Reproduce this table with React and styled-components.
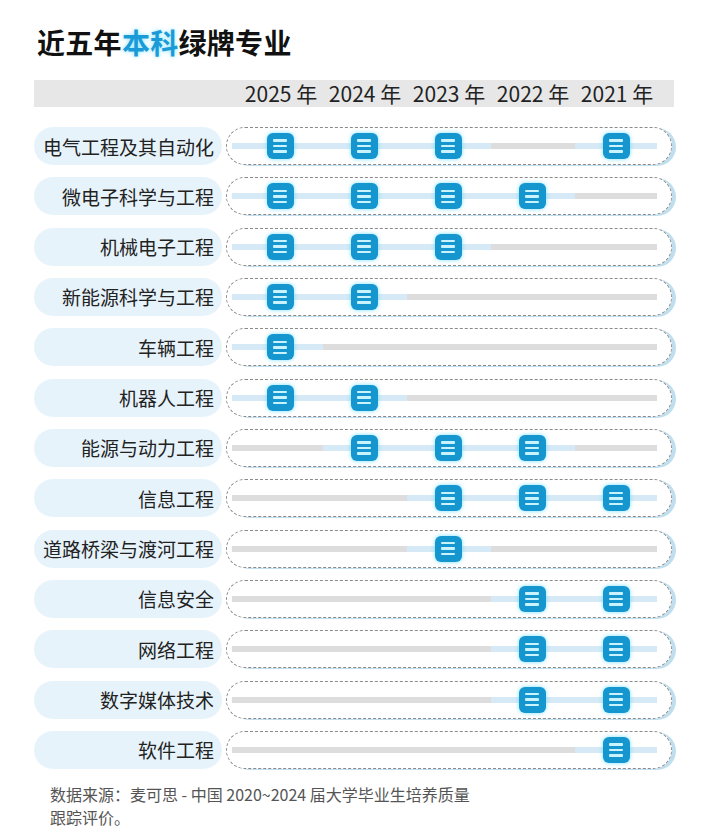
import React from "react";
import styled, { createGlobalStyle } from "styled-components";

const years = ["2025 年", "2024 年", "2023 年", "2022 年", "2021 年"];

const majors = [
  { name: "电气工程及其自动化", on: [1, 1, 1, 0, 1] },
  { name: "微电子科学与工程", on: [1, 1, 1, 1, 0] },
  { name: "机械电子工程", on: [1, 1, 1, 0, 0] },
  { name: "新能源科学与工程", on: [1, 1, 0, 0, 0] },
  { name: "车辆工程", on: [1, 0, 0, 0, 0] },
  { name: "机器人工程", on: [1, 1, 0, 0, 0] },
  { name: "能源与动力工程", on: [0, 1, 1, 1, 0] },
  { name: "信息工程", on: [0, 0, 1, 1, 1] },
  { name: "道路桥梁与渡河工程", on: [0, 0, 1, 0, 0] },
  { name: "信息安全", on: [0, 0, 0, 1, 1] },
  { name: "网络工程", on: [0, 0, 0, 1, 1] },
  { name: "数字媒体技术", on: [0, 0, 0, 1, 1] },
  { name: "软件工程", on: [0, 0, 0, 0, 1] },
];

const GlobalStyle = createGlobalStyle`
  body {
    margin: 0;
    background: #ffffff;
    font-family: "Noto Sans CJK SC", "Noto Sans", sans-serif;
  }
`;

const Page = styled.div`
  width: 712px;
  height: 831px;
  padding: 26px 0 0 34px;
  box-sizing: border-box;
  overflow: hidden;
`;

const Title = styled.h1`
  margin: 0 0 0 3px;
  font-size: 28px;
  line-height: 32px;
  font-weight: 700;
  color: #111;
  letter-spacing: 0.3px;
`;

const Accent = styled.span`
  color: #1a9bd7;
  text-shadow: 0 0 4px rgba(90, 220, 255, 0.7);
`;

const HeaderBar = styled.div`
  margin-top: 22px;
  width: 640px;
  height: 27px;
  background: #e7e7e7;
  display: grid;
  grid-template-columns: 205px repeat(5, 84px);
  align-items: center;
`;

const Year = styled.div`
  grid-column: ${(p) => p.col};
  text-align: center;
  font-size: 21px;
  line-height: 27px;
  color: #222;
  white-space: nowrap;
`;

const Rows = styled.div`
  margin-top: 20px;
  display: flex;
  flex-direction: column;
  gap: 12.33px;
`;

const Row = styled.div`
  display: grid;
  grid-template-columns: 188px 446px;
  column-gap: 4px;
  height: 38px;
`;

const Label = styled.div`
  background: #e7f3fb;
  border-radius: 19px;
  display: flex;
  align-items: center;
  justify-content: flex-end;
  padding-right: 8px;
  font-size: 19px;
  color: #222;
  white-space: nowrap;
`;

const Track = styled.div`
  border: 1px dashed #8a8a8a;
  border-radius: 19px;
  box-sizing: border-box;
  box-shadow: 4px 1px 0 #bfdeee;
  display: flex;
  align-items: center;
  padding-left: 12px;
`;

const Cell = styled.div`
  position: relative;
  width: 84px;
  height: 100%;
  display: flex;
  align-items: center;
  justify-content: center;

  &::before {
    content: "";
    position: absolute;
    top: 50%;
    margin-top: -3px;
    height: 6px;
    left: ${(p) => (p.first ? "-7px" : "0")};
    right: ${(p) => (p.last ? "2px" : "0")};
    background: ${(p) => (p.active ? "#d5eaf6" : "#dddddd")};
  }
`;

const Badge = styled.div`
  position: relative;
  width: 27px;
  height: 26px;
  border-radius: 6px;
  background: #1596cf;
  box-shadow: 0 0 4px rgba(80, 215, 255, 0.75);
  display: flex;
  flex-direction: column;
  justify-content: center;
  align-items: center;
  gap: 3px;
  margin-left: -2px;
`;

const Bar = styled.span`
  width: 14px;
  height: 2.5px;
  border-radius: 1px;
  background: #c9f3ff;
`;

const Footer = styled.div`
  margin: 14px 0 0 16px;
  font-size: 16px;
  line-height: 23px;
  color: #555;
`;

const MajorRow = ({ name, on }) => (
  <Row>
    <Label>{name}</Label>
    <Track>
      {on.map((v, i) => (
        <Cell key={i} active={v} first={i === 0} last={i === on.length - 1}>
          {v ? (
            <Badge>
              <Bar />
              <Bar />
              <Bar />
            </Badge>
          ) : null}
        </Cell>
      ))}
    </Track>
  </Row>
);

const App = () => {
  return (
    <>
      <GlobalStyle />
      <Page>
        <Title>
          近五年<Accent>本科</Accent>绿牌专业
        </Title>
        <HeaderBar>
          {years.map((y, i) => (
            <Year key={y} col={i + 2}>
              {y}
            </Year>
          ))}
        </HeaderBar>
        <Rows>
          {majors.map((m) => (
            <MajorRow key={m.name} name={m.name} on={m.on} />
          ))}
        </Rows>
        <Footer>
          数据来源：麦可思 - 中国 2020~2024 届大学毕业生培养质量
          <br />
          跟踪评价。
        </Footer>
      </Page>
    </>
  );
};

export default App;
